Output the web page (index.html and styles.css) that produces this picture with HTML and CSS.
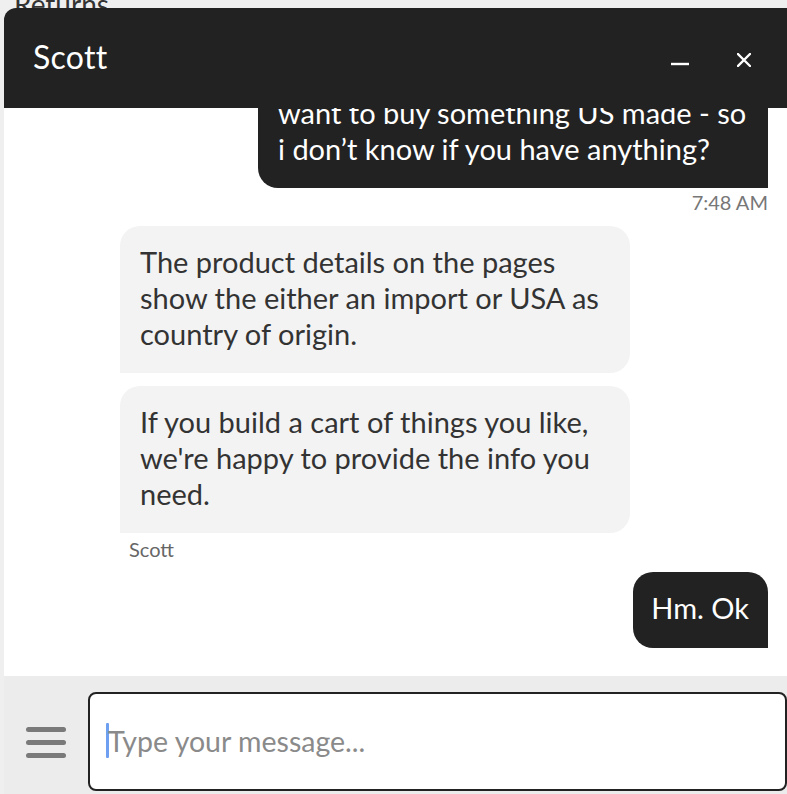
FILE: index.html
```html
<!DOCTYPE html>
<html lang="en">
<head>
<meta charset="utf-8">
<title>Chat with Scott</title>
<link rel="stylesheet" href="styles.css">
</head>
<body>
<div class="page">
  <a class="page-link" href="#">Returns</a>
</div>

<section class="chat">
  <header class="chat-header">
    <h1 class="chat-title">Scott</h1>
    <div class="chat-controls">
      <button class="ctrl ctrl-min" aria-label="Minimize">
        <svg width="18" height="18" viewBox="0 0 18 18"><path d="M0 15H18" stroke="#fff" stroke-width="2.4" fill="none"/></svg>
      </button>
      <button class="ctrl ctrl-close" aria-label="Close">
        <svg width="14" height="14" viewBox="0 0 14 14"><path d="M1 1L13 13M13 1L1 13" stroke="#fff" stroke-width="2.3" fill="none" stroke-linecap="square"/></svg>
      </button>
    </div>
  </header>

  <div class="messages">
    <div class="row row-out">
      <div class="bubble bubble-out bubble-wide">want to buy something US made - so<br>i don’t know if you have anything?</div>
    </div>
    <div class="timestamp">7:48 AM</div>

    <div class="group-in">
      <div class="bubble bubble-in">The product details on the pages<br>show the either an import or USA as<br>country of origin.</div>
      <div class="bubble bubble-in">If you build a cart of things you like,<br>we're happy to provide the info you<br>need.</div>
      <div class="sender">Scott</div>
    </div>

    <div class="row row-out row-last">
      <div class="bubble bubble-out">Hm. Ok</div>
    </div>
  </div>

  <footer class="composer">
    <button class="menu-btn" aria-label="Menu">
      <span class="menu-line"></span>
      <span class="menu-line"></span>
      <span class="menu-line"></span>
    </button>
    <div class="input">
      <span class="caret"></span>
      <span class="placeholder">Type your message...</span>
    </div>
  </footer>
</section>
</body>
</html>
```

FILE: styles.css
```css
* { box-sizing: border-box; }

html, body {
  margin: 0;
  height: 100%;
}

body {
  background: #efefef;
  font-family: "Lato", "Open Sans", sans-serif;
  overflow: hidden;
}

.page {
  padding: 0 0 0 14px;
  margin-top: -12px;
}

.page-link {
  font-size: 28px;
  color: #333;
  text-decoration: none;
  line-height: 32px;
}

.chat {
  position: fixed;
  left: 4px;
  top: 8px;
  right: 0;
  bottom: 0;
  display: flex;
  flex-direction: column;
  background: #fff;
  border-top-left-radius: 12px;
  overflow: hidden;
}

.chat-header {
  flex: 0 0 100px;
  background: #222;
  display: flex;
  align-items: center;
  justify-content: space-between;
  padding: 0 36px 0 29px;
  z-index: 2;
}

.chat-title {
  margin: 0;
  color: #fff;
  font-size: 32px;
  line-height: 40px;
  font-weight: 400;
  letter-spacing: 0.3px;
  margin-top: -2px;
}

.chat-controls {
  display: flex;
  align-items: center;
  gap: 48px;
}

.ctrl {
  background: none;
  border: 0;
  padding: 0;
  display: block;
}

.ctrl svg { display: block; }

.ctrl-close { margin-top: 4px; }

.messages {
  flex: 1 1 auto;
  display: flex;
  flex-direction: column;
  justify-content: flex-end;
  overflow: hidden;
  padding: 0 19px 28px 116px;
  min-height: 0;
}

.row {
  display: flex;
  justify-content: flex-end;
}

.bubble {
  font-size: 29px;
  line-height: 36px;
  padding: 18px 20px 21px;
  white-space: nowrap;
}

.bubble-out {
  background: #222;
  color: #fff;
  border-radius: 20px 20px 0 20px;
}

.bubble-wide { width: 510px; }

.row-last .bubble {
  padding: 18px 19px 22px 18px;
}

.row-last { margin-top: 11px; }

.timestamp {
  text-align: right;
  font-size: 20px;
  line-height: 24px;
  color: #777;
  margin-top: 2px;
  margin-bottom: 1px;
}

.group-in {
  margin-top: 11px;
  display: flex;
  flex-direction: column;
  gap: 13px;
}

.bubble-in {
  width: 510px;
  background: #f3f3f3;
  color: #333;
  border-radius: 20px 20px 20px 0;
}

.sender {
  margin-top: -9px;
  padding-left: 9px;
  font-size: 20px;
  line-height: 24px;
  color: #666;
}

.composer {
  flex: 0 0 118px;
  background: #ececec;
  display: flex;
  align-items: flex-start;
  padding: 16px 0 0 22px;
}

.menu-btn {
  background: none;
  border: 0;
  padding: 0;
  width: 40px;
  margin-top: 35px;
  display: flex;
  flex-direction: column;
  gap: 8px;
}

.menu-line {
  display: block;
  height: 5px;
  border-radius: 3px;
  background: #7a7a7a;
}

.input {
  margin-left: 22px;
  flex: 1 1 auto;
  height: 99px;
  background: #fff;
  border: 2px solid #222;
  border-radius: 8px;
  display: flex;
  align-items: center;
  padding-left: 16px;
  padding-bottom: 2px;
  position: relative;
}

.caret {
  width: 3px;
  height: 35px;
  background: #6f9ff0;
  border-radius: 1px;
  margin-right: -1px;
}

.placeholder {
  font-size: 28.5px;
  color: #8a8a8a;
}
```
